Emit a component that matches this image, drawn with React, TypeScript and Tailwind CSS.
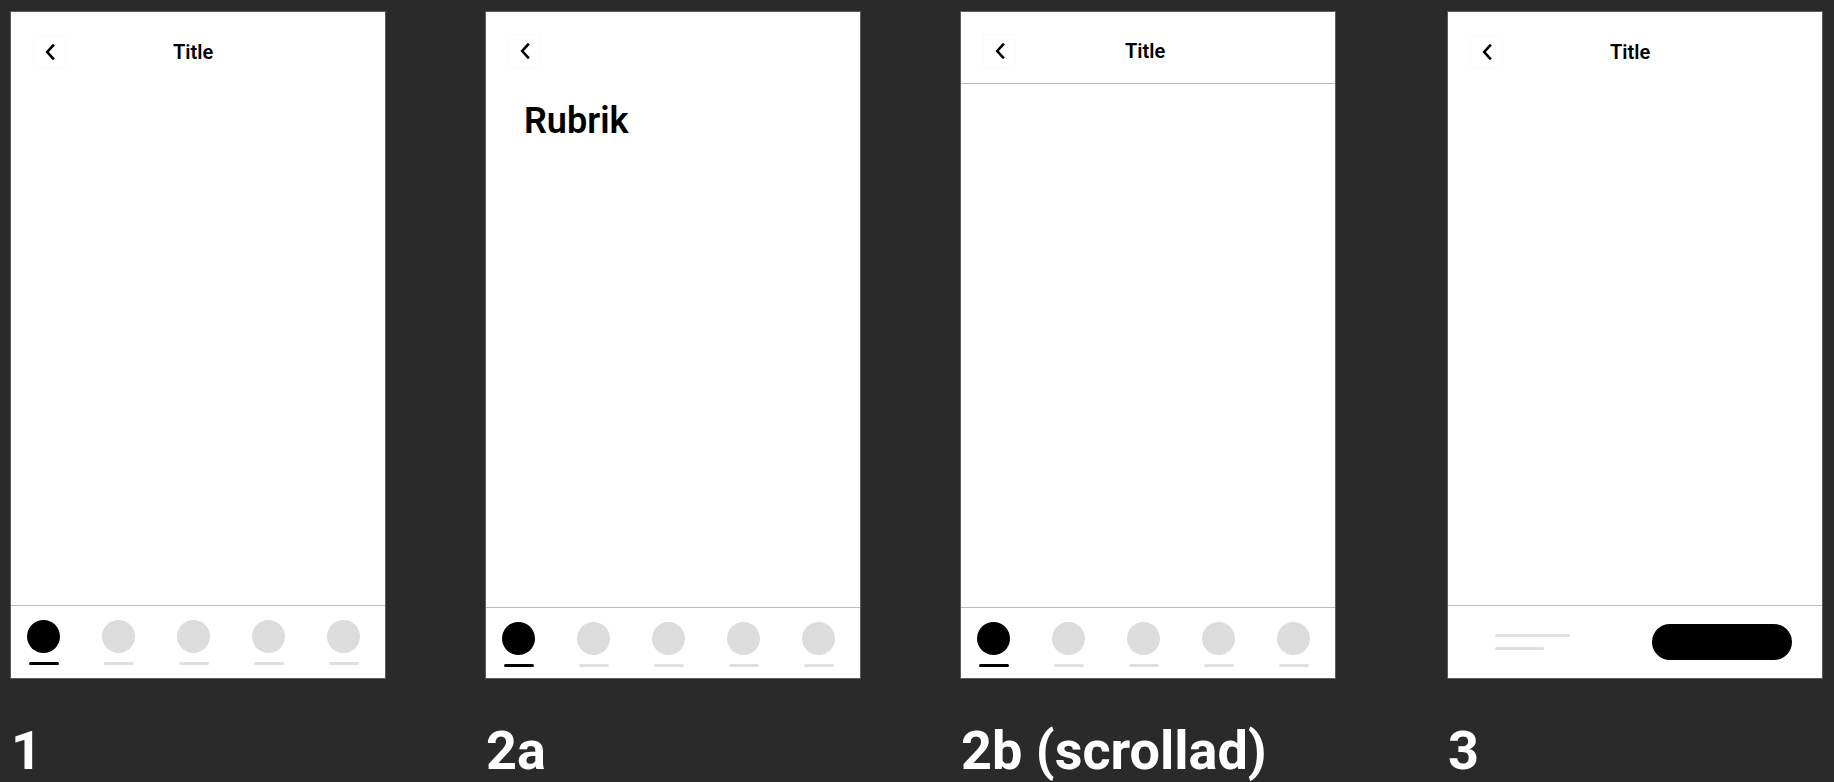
import { FC } from 'react';

const BackButton: FC = () => (
  <div className="flex h-[34px] w-[33px] items-center justify-center border border-[#fbfbfb]">
    <svg width="10" height="16" viewBox="0 0 10 16" fill="none">
      <polyline
        points="8,1.6 2.2,8 8,14.4"
        stroke="#000"
        strokeWidth="2.6"
        strokeLinecap="square"
        strokeLinejoin="miter"
      />
    </svg>
  </div>
);

const TabBar: FC<{ pad: string }> = ({ pad }) => (
  <div className={`flex gap-[42px] border-t border-[#bdbdbd] pl-[16px] ${pad}`}>
    {[0, 1, 2, 3, 4].map(i => (
      <div key={i} className="flex w-[33px] flex-col items-center">
        <div className={`h-[33px] w-[33px] rounded-full ${i === 0 ? 'bg-black' : 'bg-[#dcdcdc]'}`} />
        <div className={`mt-[9px] h-[3px] w-[30px] rounded-full ${i === 0 ? 'bg-black' : 'bg-[#e0e0e0]'}`} />
      </div>
    ))}
  </div>
);

const Frame: FC<{ children: React.ReactNode }> = ({ children }) => (
  <div className="flex h-[668px] w-[376px] flex-col border border-[#5c5c5c] bg-white">{children}</div>
);

const Label: FC<{ text: string }> = ({ text }) => (
  <div className="mt-[45px] pl-[1px] text-[54px] font-bold leading-none text-white">{text}</div>
);

export default function App() {
  return (
    <div className="flex h-[782px] w-[1834px] bg-[#2a2a2a] pl-[10px] pt-[11px] font-['Roboto',sans-serif] text-black">
      {/* 1 */}
      <div className="flex flex-col">
        <Frame>
          <div className="flex items-center pl-[22px] pt-[23px]">
            <BackButton />
            <span className="ml-[107px] text-[20px] font-semibold">Title</span>
          </div>
          <div className="flex-1" />
          <TabBar pad="pt-[14px] pb-[13px]" />
        </Frame>
        <Label text="1" />
      </div>

      {/* 2a */}
      <div className="ml-[99px] flex flex-col">
        <Frame>
          <div className="flex items-center pl-[22px] pt-[22px]">
            <BackButton />
          </div>
          <div className="mt-[35px] pl-[38px] text-[36px] font-semibold leading-none">Rubrik</div>
          <div className="flex-1" />
          <TabBar pad="pt-[14px] pb-[11px]" />
        </Frame>
        <Label text="2a" />
      </div>

      {/* 2b */}
      <div className="ml-[99px] flex flex-col">
        <Frame>
          <div className="flex h-[72px] items-start border-b border-[#bdbdbd] pl-[22px] pt-[22px]">
            <div className="flex items-center">
              <BackButton />
              <span className="ml-[109px] text-[20px] font-semibold">Title</span>
            </div>
          </div>
          <div className="flex-1" />
          <TabBar pad="pt-[14px] pb-[11px]" />
        </Frame>
        <Label text="2b (scrollad)" />
      </div>

      {/* 3 */}
      <div className="ml-[111px] flex flex-col">
        <Frame>
          <div className="flex items-center pl-[22px] pt-[23px]">
            <BackButton />
            <span className="ml-[107px] text-[20px] font-semibold">Title</span>
          </div>
          <div className="flex-1" />
          <div className="flex h-[73px] items-center justify-between border-t border-[#bdbdbd] pl-[47px] pr-[30px]">
            <div className="flex flex-col gap-[10px]">
              <div className="h-[3px] w-[75px] rounded-full bg-[#e0e0e0]" />
              <div className="h-[3px] w-[49px] rounded-full bg-[#e0e0e0]" />
            </div>
            <div className="h-[36px] w-[140px] rounded-full bg-black" />
          </div>
        </Frame>
        <Label text="3" />
      </div>
    </div>
  );
}
